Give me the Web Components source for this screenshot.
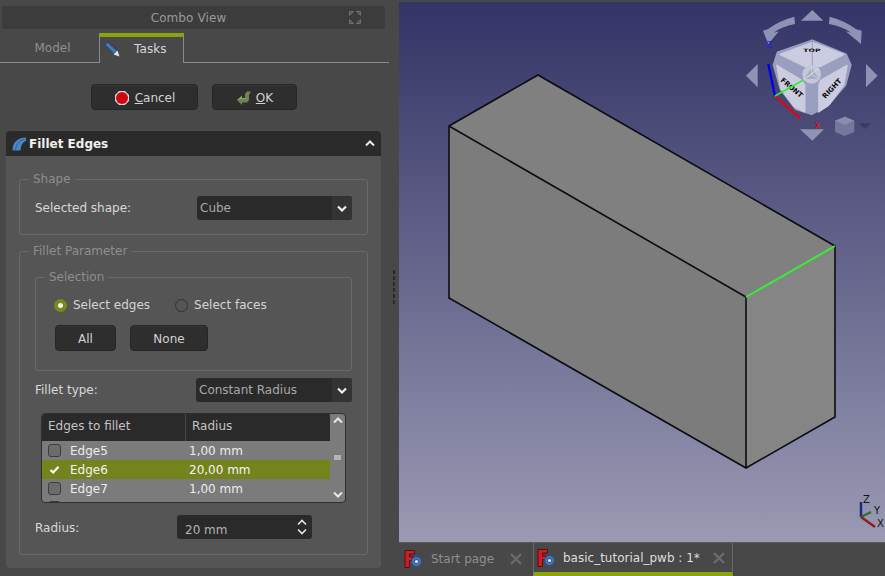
<!DOCTYPE html>
<html><head><meta charset="utf-8">
<style>
html,body{margin:0;padding:0;height:100%;overflow:hidden}
body{background:#484848;font:12px/14px "DejaVu Sans",sans-serif;color:#d8d8d8}
</style></head>
<body>
<fc-app>
  <combo-pane slot="left"></combo-pane>
  <view-pane slot="right"></view-pane>
</fc-app>
<script>
function el(name, css, html){
  customElements.define(name, class extends HTMLElement{
    constructor(){super();const s=this.attachShadow({mode:'open'});
      s.innerHTML='<style>'+css+'</style>'+html;}
  });
}
el('fc-app',`:host{display:grid;grid-template-columns:399px 486px;width:885px;height:576px;background:#484848}`,`<slot name="left"></slot><slot name="right"></slot>`);

el('fc-titlebar',`:host{display:flex;align-items:center;justify-content:center;position:relative;height:23px;margin:6px 14px 0 2px;padding-right:10px;background:#3c3c3c;border-radius:3px;color:#9a9a9a;letter-spacing:.1px}
svg{position:absolute;right:24px;top:5px}`,
`<slot></slot><svg width="12" height="13" viewBox="0 0 12 13" fill="#565656" stroke="#6f6f6f" stroke-width="1"><path d="M.5 4.500V.5H4.500ZM11.500 4.500V.5H7.500ZM.5 8.500V12.500H4.500ZM11.500 8.500V12.500H7.500Z"/></svg>`);

el('fc-tabs',`:host{display:flex;margin-top:4px;margin-right:10px;border-bottom:1px solid #8a8a8a;box-sizing:border-box;height:30px}
.m{width:99px;text-align:center;line-height:29px;color:#8f8f8f;padding:1px 0 0 6px;box-sizing:border-box}
.t{width:85px;height:30px;box-sizing:border-box;border:1px solid #8a8a8a;border-top:4px solid #8aa40a;border-bottom:0;background:#484848;display:flex;align-items:center;color:#d6d6d6;padding:0 0 3px 4px}
.t svg{flex:none}
.t span{margin-left:14px;letter-spacing:.1px}`,
`<div class="m">Model</div><div class="t"><svg width="16" height="16" viewBox="0 0 16 16"><path d="M.5 4 4 .5 13.500 9.500 9.500 13.500Z" fill="#3a659c" stroke="#1f3554" stroke-width=".8"/><path d="M2.500 2.800 11.500 11" stroke="#6d95c9" stroke-width="1"/><path d="M9.500 13.500 13.500 9.500 15.500 15.500Z" fill="#e4e4e4"/></svg><span>Tasks</span></div>`);

el('fc-button',`:host{display:inline-flex;align-items:center;justify-content:center;box-sizing:border-box;height:26px;background:#2e2e2e;border:1px solid #262626;border-radius:4px;color:#d2d2d2;gap:var(--gap,4px);padding-top:1px;box-shadow:inset 0 1px 0 #353535}
::slotted(svg){flex:none}`,`<slot></slot>`);

el('fc-actions',`:host{display:flex;gap:14px;margin:21px 0 21px 91px}`,`<slot></slot>`);

el('fc-taskbox',`:host{display:block;margin:0 18px 0 6px;height:437px;background:#555;border-radius:4px;overflow:hidden}
.h{height:25px;background:#2a2a2a;display:flex;align-items:center;padding:0 6px 0 6px;font-weight:bold;color:#f0f0f0;font-size:12px;gap:3px}
.h span{flex:1}
.b{padding:23px 13px 0}`,
`<div class="h"><svg width="14" height="14" viewBox="0 0 14 14"><path d="M.5 13.500C.5 6 5 .5 14 .5L14 4C11 4.500 9 8 8.500 13.500Z" fill="#4a86c8"/><path d="M3.500 13C4 8 7 3.500 12.500 2" stroke="#2c5f99" fill="none"/></svg><span>Fillet Edges</span><svg width="10" height="7" viewBox="0 0 10 7"><path d="M1 5.500 5 1.500 9 5.500" stroke="#e8e8e8" stroke-width="2" fill="none"/></svg></div><div class="b"><slot></slot></div>`);

el('fc-group',`:host{display:block;position:relative;box-sizing:border-box;border:1px solid #696969;border-radius:3px}
.l{position:absolute;left:9px;top:-8px;background:#555;padding:0 4px;color:#8e8e8e;line-height:14px}`,
`<div class="l"></div><slot></slot>`);

el('fc-combo',`:host{display:flex;align-items:center;box-sizing:border-box;height:24px;background:#2a2a2a;border-radius:3px;color:#a8a8a8;padding-left:3px;overflow:hidden}
span{flex:1}
i{display:flex;align-items:center;justify-content:center;width:20px;height:100%;background:#333}`,
`<span><slot></slot></span><i><svg width="10" height="7" viewBox="0 0 10 7"><path d="M1 1.500 5 5.500 9 1.500" stroke="#eee" stroke-width="2.200" fill="none"/></svg></i>`);

el('fc-row',`:host{display:flex;align-items:center;justify-content:space-between}`,`<slot></slot>`);

el('fc-radio',`:host{display:inline-flex;align-items:center;gap:6px;color:#d4d4d4}
b{box-sizing:border-box;width:13px;height:13px;border-radius:50%;border:1px solid #333;background:#555;display:flex;align-items:center;justify-content:center}
:host([on]) b{background:#7a8a1a;border-color:#7a8a1a}
:host([on]) b::after{content:"";width:5px;height:5px;border-radius:50%;background:#f2f2f2}`,
`<b></b><slot></slot>`);

el('fc-table',`:host{display:flex;box-sizing:border-box;margin:0 6px;height:90px;border:1px solid #2f2f2f;border-radius:4px;background:#7b7b7b;overflow:hidden;color:#e6e6e6}
.main{width:288px;flex:none;overflow:hidden}
.hd{display:flex;height:27px;background:#2a2a2a;color:#c4c4c4;line-height:25px}
.hd div:first-child{width:144px;padding-left:6px;box-sizing:border-box;border-right:1px solid #454545}
.hd div:last-child{padding-left:6px}
.sb{flex:1;display:flex;flex-direction:column;align-items:center;justify-content:space-between;padding:3px 0 4px}
.sb u{display:block;width:7px;height:5px;background:#b4b4b4}`,
`<div class="main"><div class="hd"><div>Edges to fillet</div><div>Radius</div></div><slot></slot></div>
<div class="sb"><svg width="10" height="7" viewBox="0 0 10 7"><path d="M1 5.500 5 1.500 9 5.500" stroke="#e8e8e8" stroke-width="2" fill="none"/></svg><u></u><svg width="10" height="7" viewBox="0 0 10 7"><path d="M1 1.500 5 5.500 9 1.500" stroke="#e8e8e8" stroke-width="2" fill="none"/></svg></div>`);

el('fc-item',`:host{display:flex;align-items:center;height:19px;color:#ececec;flex:none}
:host([sel]){background:#75831c;color:#f4f4f4}
.c{width:13px;height:13px;box-sizing:border-box;border:1px solid #3d3d3d;border-radius:3px;background:#6c6c6c;margin:0 9px 0 6px;flex:none}
:host([sel]) .c{border:0;background:none;display:flex;align-items:center;justify-content:center}
.n{width:119px;flex:none}`,
`<div class="c"></div><div class="n"><slot></slot></div><div class="r"><slot name="r"></slot></div>`);

el('fc-spin',`:host{display:flex;align-items:center;box-sizing:border-box;width:135px;height:24px;background:#2a2a2a;border-radius:3px;color:#b4b4b4;padding:6px 0 0 8px}
span{flex:1}svg{margin:-6px 5px 0 0}`,
`<span><slot></slot></span><svg width="10" height="16" viewBox="0 0 10 16"><path d="M1 5.500 5 1.500 9 5.500M1 10.500 5 14.500 9 10.500" stroke="#e0e0e0" stroke-width="1.700" fill="none"/></svg>`);

el('combo-pane',`:host{display:block;width:399px;height:576px;overflow:hidden;position:relative}
.split{position:absolute;left:393px;top:270px;display:flex;flex-direction:column;gap:2px}
.split i{display:block;width:2px;height:4px;background:#2a2a2a}`,
`<fc-titlebar>Combo View</fc-titlebar>
<fc-tabs></fc-tabs>
<fc-actions>
  <fc-button style="width:107px"><svg width="16" height="16" viewBox="0 0 16 16"><path d="M5 1h6l4 4v6l-4 4H5l-4-4V5z" fill="#d4d4d4"/><circle cx="8" cy="8" r="6" fill="#cf0510"/></svg><span style="margin-left:1px"><span style="text-decoration:underline">C</span>ancel</span></fc-button>
  <fc-button style="width:85px"><svg width="16" height="16" viewBox="0 0 16 16"><path d="M1 10 6 5.500V8h3V4L11 1.500h4L13 5v5l-2 2.500H6V15z" fill="#6f8455"/><path d="M1 10 6 6v2h3l1 1H5z" fill="#8ea676"/></svg><span><span style="text-decoration:underline">O</span>K</span></fc-button>
</fc-actions>
<fc-taskbox>
  <fc-group legend="Shape" style="height:56px;padding:16px 15px 0 15px">
    <fc-row><span>Selected shape:</span><fc-combo style="width:155px">Cube</fc-combo></fc-row>
  </fc-group>
  <fc-group legend="Fillet Parameter" style="height:304px;margin-top:16px;padding:25px 15px 0">
    <fc-group legend="Selection" style="height:94px;padding:0 0 0 18px">
      <div style="display:flex;gap:25px;margin-top:20px"><fc-radio on>Select edges</fc-radio><fc-radio>Select faces</fc-radio></div>
      <div style="display:flex;gap:14px;margin-top:13px;margin-left:1px"><fc-button style="width:61px">All</fc-button><fc-button style="width:78px">None</fc-button></div>
    </fc-group>
    <fc-row style="margin-top:7px"><span>Fillet type:</span><fc-combo style="width:156px">Constant Radius</fc-combo></fc-row>
    <div style="height:11px"></div>
    <fc-table>
      <fc-item>Edge5<span slot="r">1,00 mm</span></fc-item>
      <fc-item sel>Edge6<span slot="r">20,00 mm</span></fc-item>
      <fc-item>Edge7<span slot="r">1,00 mm</span></fc-item>
      <fc-item></fc-item>
    </fc-table>
    <div style="display:flex;align-items:center;margin-top:12px"><span style="width:142px;margin-top:1px">Radius:</span><fc-spin>20 mm</fc-spin></div>
  </fc-group>
</fc-taskbox>
<div class="split"><i></i><i></i><i></i><i></i><i></i><i></i></div>`);

const logo=`<svg width="20" height="18" viewBox="0 0 20 18" style="flex:none"><path d="M1 .5h9.500v3.500H5.500v3H9.500v3.500H5.500v7H1z" fill="#d01c22" stroke="#4c0d10" stroke-width=".9"/><g transform="translate(12.500 11.500)"><circle r="5" fill="none" stroke="#24509c" stroke-width="1.700" stroke-dasharray="2 1.930"/><circle r="3.400" fill="none" stroke="#3f74c8" stroke-width="2.200"/><circle r="1.600" fill="#e2eaf7"/></g></svg>`;
const cross=`<svg class="x" width="12" height="12" viewBox="0 0 12 12"><path d="M1 1 11 11M11 1 1 11" stroke="#6b6b6b" stroke-width="2.400"/></svg>`;
el('doc-tabs',`:host{display:flex;height:34px;background:#484848;color:#8f8f8f;border-top:1px solid #5a5a5a;box-sizing:border-box}
.a,.b{display:flex;align-items:center;box-sizing:border-box}
.a{width:134px;padding:2px 0 4px 5px}
.b{width:200px;border-left:1px solid #6a6a6a;border-right:1px solid #6a6a6a;padding:0 0 0 3px;color:#dedede;border-bottom:4px solid #8aa40a;background:#484848}
span{flex:1;white-space:nowrap}
.a span{margin-left:7px}.b span{margin-left:6px}
.a svg.x{margin-right:11px}.b svg.x{margin-right:7px}`,
`<div class="a">${logo}<span>Start page</span>${cross}</div>
<div class="b">${logo}<span>basic_tutorial_pwb : 1*</span>${cross}</div>`);

el('view-3d',`:host{display:block;position:relative;height:542px;overflow:hidden}
svg{display:block;position:absolute;left:0;top:0}`,
`<svg width="486" height="542" viewBox="399 0 486 542">
<defs><linearGradient id="g" x1="0" y1="0" x2="0" y2="1"><stop offset="0" stop-color="#333366"/><stop offset="1" stop-color="#9a9ab4"/></linearGradient></defs>
<rect x="399" y="0" width="486" height="542" fill="url(#g)"/>
<rect x="399" y="0" width="486" height="2" fill="#484848"/>
<polygon points="449,126 538,75 835,246 746,297" fill="#808080"/>
<polygon points="449,126 746,297 746,468 449,298" fill="#7c7c7c"/>
<polygon points="746,297 835,246 835,417 746,468" fill="#858585"/>
<path d="M449 126 538 75 835 246V417L746 468 449 298ZM449 126 746 297V468" fill="none" stroke="#0c0c14" stroke-width="1.600"/>
<path d="M746 297 835 246" stroke="#33f033" stroke-width="2"/>
<g transform="translate(735 0) scale(.3333)">
  <g fill="#8e93b6">
    <polygon points="232,30 198,62 265,62"/><polygon points="68,192 33,227 68,262"/><polygon points="393,192 428,227 393,262"/><polygon points="195,388 267,388 232,422"/>
    <path d="M178 50Q132 62 98 88L84 92 100 132 132 94 116 98Q140 80 180 72Z"/>
    <path d="M284 50Q330 62 364 88L380 92 378 132 332 94 348 98Q324 80 282 72Z"/>
  </g>
  <g transform="translate(105 105)">
    <path d="M127 16 228 58 242 90 226 150 173 212 125 237 77 222 32 163 11 90 23 52Z" fill="#9b9fbf" stroke="#9b9fbf" stroke-width="6" stroke-linejoin="round"/>
    <path d="M127 22 222 58 150 95H105L30 58Z" fill="#cbccdf" stroke="#cbccdf" stroke-width="4" stroke-linejoin="round"/>
    <path d="M20 90 95 135 105 150V232L72 216 32 162Z" fill="#cbccdf" stroke="#cbccdf" stroke-width="3" stroke-linejoin="round"/>
    <path d="M232 90 152 135 146 150V232L178 210 222 150Z" fill="#cbccdf" stroke="#cbccdf" stroke-width="3" stroke-linejoin="round"/>
    <path d="M127 18V92" stroke="#9b9fbf" stroke-width="3"/>
    <circle cx="125" cy="118" r="28" fill="#c5c7da"/><path d="M125 98 148 132H102Z" fill="#a8abc6"/><path d="M125 118V98M125 118 102 132M125 118 148 132" stroke="#dfe0ec" stroke-width="2"/>
    <g font-family="DejaVu Sans" font-weight="bold" fill="#0a0a0a">
      <text transform="translate(100 50) scale(1 .6)" font-size="23">TOP</text>
      <text transform="translate(30 138) rotate(40)" font-size="21">FRONT</text>
      <text transform="translate(166 192) rotate(-47)" font-size="21">RIGHT</text>
    </g>
  </g>
  <path d="M120 288 100 192" stroke="#0000f0" stroke-width="7"/>
  <path d="M120 288 195 355" stroke="#ee0000" stroke-width="6"/>
  <path d="M120 288 205 240" stroke="#33ee33" stroke-width="5"/>
  <path d="M205 240 252 205" stroke="#cfe8cf" stroke-width="3"/>
  <text x="94" y="144" font-size="26" fill="#2020f0" font-family="DejaVu Sans">Z</text>
  <text x="238" y="388" font-size="26" fill="#ee0000" font-family="DejaVu Sans">X</text>
  <path d="M300 362 330 350 358 362V396L328 408 300 396Z" fill="#74789a"/>
  <path d="M300 362 330 350 358 362 328 374Z" fill="#8a8eae"/>
  <polygon points="372,370 408,370 390,387" fill="#333e66"/>
</g>
<g font-family="DejaVu Sans" font-size="10">
  <path d="M861 517V502" stroke="#1a2a80" stroke-width="2.500"/>
  <path d="M861 517 871 512" stroke="#2a7030" stroke-width="2.500"/>
  <path d="M861 517 875 527" stroke="#8a2020" stroke-width="2.500"/>
  <text x="863" y="503" fill="#111">Z</text>
  <text x="874" y="514" fill="#111">Y</text>
  <text x="877" y="527" fill="#111">X</text>
</g>
</svg>`);

el('view-pane',`:host{display:flex;flex-direction:column;height:576px}`,`<view-3d></view-3d><doc-tabs></doc-tabs>`);

function fix(root){
  root.querySelectorAll('*').forEach(e=>{
    if(e.shadowRoot) fix(e.shadowRoot);
    if(e.tagName==='FC-GROUP') e.shadowRoot.querySelector('.l').textContent=e.getAttribute('legend');
    if(e.tagName==='FC-ITEM'&&e.hasAttribute('sel')) e.shadowRoot.querySelector('.c').innerHTML='<svg width="11" height="10" viewBox="0 0 11 10"><path d="M1.500 5 4.200 7.500 9.500 1.800" stroke="#fff" stroke-width="2.200" fill="none"/></svg>';
  });
}
fix(document);
</script>
</body></html>
